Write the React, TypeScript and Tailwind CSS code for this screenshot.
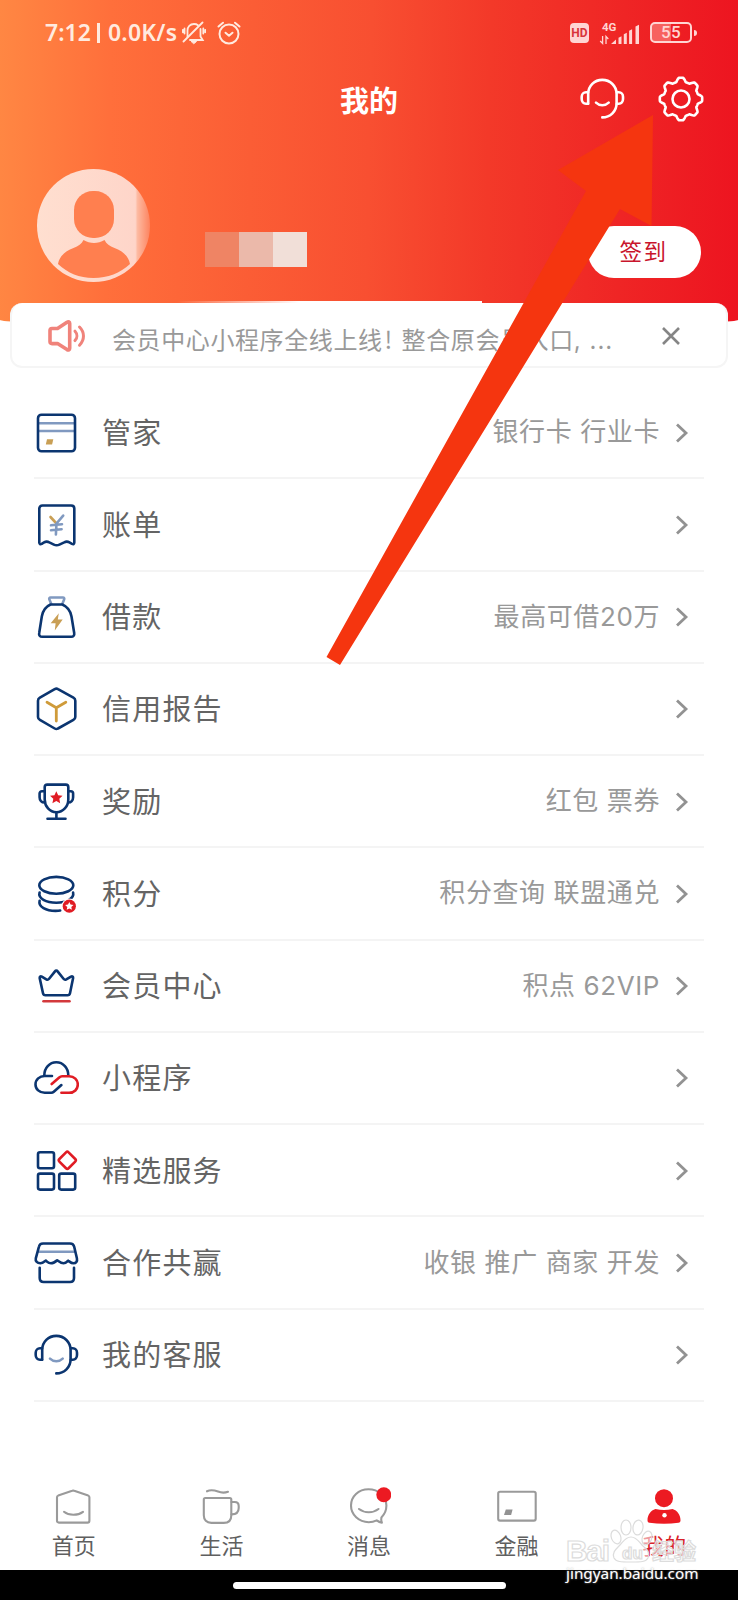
import type { ReactNode } from "react";

const NAVY = "#0b3570";
const STEEL = "#8099c0";
const GOLD = "#c99f55";
const RED = "#e01c24";

function Icon({ children, color = NAVY }: { children: ReactNode; color?: string }) {
  return (
    <svg
      width="46"
      height="46"
      viewBox="0 0 46 46"
      fill="none"
      stroke={color}
      strokeWidth="2.6"
      strokeLinecap="round"
      strokeLinejoin="round"
      className="shrink-0"
    >
      {children}
    </svg>
  );
}

function starPoints(cx: number, cy: number, r: number) {
  return Array.from({ length: 10 }, (_, i) => {
    const a = (i * Math.PI) / 5 - Math.PI / 2;
    const d = i % 2 ? r * 0.48 : r;
    return `${(cx + d * Math.cos(a)).toFixed(2)},${(cy + d * Math.sin(a)).toFixed(2)}`;
  }).join(" ");
}

// eight soft teeth around a circle
const gearPoints = Array.from({ length: 192 }, (_, i) => {
  const a = (i / 192) * Math.PI * 2;
  const wave = Math.max(-1, Math.min(1, Math.cos(8 * a) * 1.6));
  const r = 19.3 + 1.9 * wave;
  return `${(23 + r * Math.sin(a)).toFixed(2)},${(23 - r * Math.cos(a)).toFixed(2)}`;
}).join(" ");

function Headset({ color, smile }: { color: string; smile: string }) {
  return (
    <Icon color={color}>
      <path d="M9.2 27.8V18C9.2 10 15.4 3.9 23.3 3.9S37.6 10 37.6 18v9.2c0 8-6.3 14.2-14.3 14.2" />
      <path d="M9 16.2H7c-2.5 0-4.3 2-4.3 4.6V23c0 2.7 1.8 4.7 4.3 4.7h2M37.8 16.2h2c2.5 0 4.2 2 4.2 4.6V23c0 2.7-1.7 4.7-4.2 4.7h-2" />
      <path d="M17 26.6c3.6 3.5 9 3.5 12.7 0" stroke={smile} />
    </Icon>
  );
}

const rows: { label: string; hint?: string; icon: ReactNode }[] = [
  {
    label: "管家",
    hint: "银行卡 行业卡",
    icon: (
      <Icon>
        <path d="M6 13.2h35M6 21h35" stroke={STEEL} strokeLinecap="butt" />
        <rect x="5" y="4.7" width="37" height="36.6" rx="3.5" />
        <path d="M14 29.300h6.300l-1.200 5.200h-6.300z" fill={GOLD} stroke="none" />
      </Icon>
    ),
  },
  {
    label: "账单",
    icon: (
      <Icon>
        <path d="M9.500 3.500h28.600c2 0 3.200 1.200 3.200 3.100v34c0 1.500-1 2-2.300 1.300l-2.600-1.500c-1.900-1.100-3.300-1.100-5.200 0l-4.800 2.200c-2 .9-3.600.9-5.500 0l-4.600-2.200c-2-1.100-3.300-1.100-5.200 0l-2.400 1.500c-1.300.7-2.400.2-2.400-1.300v-34c0-1.900 1.200-3.100 3.200-3.100z" />
        <path d="M17.500 15l6 6.500" stroke={GOLD} />
        <path d="M30.200 13.600l-6.700 7.900-.6 11M18 23.300l11-1.100M18 28.200l10.600-1" stroke={STEEL} />
      </Icon>
    ),
  },
  {
    label: "借款",
    hint: "最高可借20万",
    icon: (
      <Icon>
        <path d="M18.300 10l-1.900-4.500c-.5-1.200 0-2 1.200-2h12.300c1.200 0 1.700.8 1.200 2L29.300 10" stroke={STEEL} />
        <path d="M17.500 10.500h11.800c5.200 2.300 8.300 7 9.200 12l2.700 16.500c.4 2.300-.8 3.800-3 3.800H9.200c-2.300 0-3.500-1.500-3-3.800l2.600-16.500c.9-5 3.500-9.700 8.700-12z" />
        <path d="M25.800 19.200l-8.100 10.100h4.900l-.8 7.200 7.900-11h-4.900z" fill={GOLD} stroke="none" />
      </Icon>
    ),
  },
  {
    label: "信用报告",
    icon: (
      <Icon>
        <path d="M21.700 3.100c1.200-.7 2.200-.7 3.300 0l15.400 8.600c1.200.7 1.900 1.700 1.900 3v16.200c0 1.300-.7 2.300-1.900 3L25 42.500c-1.100.7-2.100.7-3.300 0L6.900 33.900c-1.200-.7-1.900-1.700-1.900-3V14.700c0-1.300.7-2.300 1.900-3z" />
        <path d="M14 16.300l9.300 5.400 9.500-5.400M23.300 21.700V35" stroke="#cf9b3a" strokeWidth="2.800" />
      </Icon>
    ),
  },
  {
    label: "奖励",
    hint: "红包 票券",
    icon: (
      <Icon>
        <path d="M14.200 5.600h18.600c1.600 0 2.500.9 2.500 2.500v12.300c0 7-5.200 12.800-11.900 12.800s-11.700-5.800-11.700-12.800V8.100c0-1.600.9-2.500 2.500-2.500z" />
        <path d="M11.500 12.300H9c-1.500 0-2.400.9-2.400 2.300v3.600c0 3.200 2 5.300 5 5.300M35.500 12.300h2.300c1.500 0 2.300.9 2.300 2.300v3.600c0 3.200-2 5.300-4.900 5.300M23.400 33.200v6.400M14.500 39.700h18" />
        <polygon points={starPoints(23.3, 18.8, 6.6)} fill={RED} stroke="none" />
      </Icon>
    ),
  },
  {
    label: "积分",
    hint: "积分查询 联盟通兑",
    icon: (
      <Icon>
        <ellipse cx="23.3" cy="14.3" rx="17" ry="8.4" />
        <path d="M6.600 21.500c-1.800 5.900 6.500 10.200 16.700 10.200 10.100 0 18.200-4.300 16.800-10.200M6.600 29.800C5 36 13.300 39.900 22.500 39.900c1.700 0 3.200 0 4.700-.3" />
        <circle cx="36.3" cy="35.2" r="7.8" fill="#fff" stroke="none" />
        <circle cx="36.3" cy="35.2" r="6.6" fill={RED} stroke="none" />
        <polygon points={starPoints(36.3, 35.3, 4.4)} fill="#fff" stroke="none" />
      </Icon>
    ),
  },
  {
    label: "会员中心",
    hint: "积点 62VIP",
    icon: (
      <Icon>
        <path d="M21.800 8.600c1-1.300 2-1.300 3 0l5.700 7.200c.8 1 1.700 1.200 2.800.6l4.700-2.800c1.300-.7 2.400 0 2.100 1.500L37 30.300c-.3 1.400-1 2-2.400 2H12.400c-1.400 0-2.100-.6-2.400-2L6.700 15.100c-.3-1.500.8-2.200 2.100-1.500l4.500 2.800c1.100.6 2 .4 2.800-.6z" />
        <path d="M10.500 38.200h26" stroke="#d3393c" />
      </Icon>
    ),
  },
  {
    label: "小程序",
    icon: (
      <Icon>
        <path d="M11.300 20.300c0-7.200 5.100-13 12-13s12 5.800 12 13" />
        <path d="M19 21h-7.300c-5.200 0-9.200 3.600-9.200 8.400s4 8.400 9.200 8.400h6.500c1.100 0 1.800-.3 2.600-1l7.600-6.700" />
        <path d="M18.700 29l7.500-6.500c.9-.8 1.700-1.200 2.900-1.200h7c5.100 0 8.700 3.500 8.700 8.200 0 4.800-3.600 8.300-8.700 8.300h-7.700" stroke={RED} />
      </Icon>
    ),
  },
  {
    label: "精选服务",
    icon: (
      <Icon>
        <rect x="5" y="4.2" width="16" height="16" rx="2" />
        <rect x="5" y="25.6" width="16" height="16" rx="2" />
        <rect x="26.2" y="25.6" width="16" height="16" rx="2" />
        <rect x="27.8" y="5.8" width="13" height="13" rx="1.800" transform="rotate(45 34.3 12.3)" stroke={RED} />
      </Icon>
    ),
  },
  {
    label: "合作共赢",
    hint: "收银 推广 商家 开发",
    icon: (
      <Icon>
        <path d="M6 11.700h35" stroke={STEEL} />
        <path d="M10 3.500h27c2.200 0 3.700 1.100 4.200 3.300l2.700 11.500c.7 3-1 5-3.300 5-2.400 0-3.700-1.400-5.400-2.600-1.300 1.200-2.800 2.600-4.700 2.600-2.500 0-4.700-2-6.300-3-1.800 1.400-3.800 3-6.200 3-2.300 0-3.700-1.500-5.200-2.700-1.600 1.200-3.200 2.700-5.500 2.700-2.900 0-5.200-2-4.500-5L5.900 6.800C6.400 4.600 7.800 3.500 10 3.500z" />
        <path d="M6.700 27.700V38c0 2.600 1.500 4 4 4H37c2.600 0 4-1.400 4-4V27.700" />
      </Icon>
    ),
  },
  { label: "我的客服", icon: <Headset color={NAVY} smile={STEEL} /> },
];

const tabs: { label: string; icon: ReactNode; active?: boolean }[] = [
  {
    label: "首页",
    icon: (
      <>
        <path d="M5 12.300c0-.8.5-1.400 1.200-1.700l14-4.800c.8-.3 1.300-.3 2 0l14 4.800c.7.300 1.200.9 1.200 1.700v23.500c0 1.100-.7 1.800-1.800 1.800H6.800C5.700 37.600 5 36.900 5 35.800z" />
        <path d="M12 26.800c5 4 13.500 4 19 0" />
      </>
    ),
  },
  {
    label: "生活",
    icon: (
      <>
        <path d="M8 6.300c4-2 7.500-1 11 .3 3.500 1.300 6.500 1.400 10 .2" />
        <path d="M6.300 13h24.500c1 0 1.500.5 1.500 1.500v15.700c0 4.800-2.700 7.700-7.500 7.700H12.300c-4.700 0-7.500-2.900-7.500-7.700V14.500c0-1 .5-1.500 1.500-1.500z" />
        <path d="M32.500 17h3.200c2.500 0 4 1.400 4 4v2c0 4-2.800 6.400-7.200 6.400" />
      </>
    ),
  },
  {
    label: "消息",
    icon: (
      <>
        <path d="M21.500 4.300C11.500 4.300 4 11.400 4 20.600s7.800 16.600 17.700 16.600c3 0 5.700-.7 8-1.800 1.700 1.300 3.300 2 5.200 2.200-.7-1.500-.9-3.500-.5-5.200 3.200-3 5-7 5-11.800 0-9.200-8-16.300-17.900-16.300z" />
        <path d="M12 24c5.500 4.300 14 4.300 19.500 0" />
        <circle cx="36.800" cy="9.800" r="7.500" fill="#ec1a22" stroke="none" />
      </>
    ),
  },
  {
    label: "金融",
    icon: (
      <>
        <rect x="3.200" y="6.800" width="37.500" height="28.800" rx="1.800" />
        <path d="M10.800 24.600h6.800l-1.500 5.400H9z" fill="#929292" stroke="none" />
      </>
    ),
  },
  {
    label: "我的",
    active: true,
    icon: (
      <g fill="#ec1a22" stroke="none">
        <circle cx="22" cy="13.200" r="9" />
        <path d="M13.500 24c5.500 1.200 11.500 1.200 17 0 4.800 1.300 8 6 8 11.300 0 1.500-.6 2.300-2 2.500-9.300 1.300-19.700 1.300-29 0-1.400-.2-2-1-2-2.500 0-5.300 3.200-10 8-11.300z" />
        <circle cx="22.500" cy="30.300" r="2.200" fill="#fff" />
      </g>
    ),
  },
];

function StatusBar() {
  return (
    <div className="flex h-16 items-center pl-[45px] pr-[41px] pt-px text-[#ffeadf]">
      <span className="w-[49px] whitespace-nowrap font-['Noto_Sans',sans-serif] text-[23px] leading-none font-semibold">7:12</span>
      <span className="ml-[3px] h-5 w-[3px] bg-[#ffeadf]" />
      <span className="ml-2 w-[69px] whitespace-nowrap font-['Noto_Sans',sans-serif] text-[23px] leading-none font-semibold tracking-[0.2px]">0.0K/s</span>
      <svg width="24" height="24" viewBox="0 0 24 24" fill="none" stroke="currentColor" strokeWidth="1.800" strokeLinecap="round" className="ml-[5px]">
        <path d="M5.500 16V9.500C5.500 5.700 8 3 12 3c1.500 0 3 .4 4 1.200M18.500 8v7.500l2.200 3.500H8" />
        <path d="M20.500 1.500L1.500 20.500M2.500 7.500v5M.9 8.800v2.500M21.300 7.500v5M23.200 8.800v2.500" />
        <path d="M9.500 20.500h5l-2.500 2z" fill="currentColor" strokeWidth="1" />
      </svg>
      <svg width="24" height="24" viewBox="0 0 24 24" fill="none" stroke="currentColor" strokeWidth="2" strokeLinecap="round" strokeLinejoin="round" className="ml-[11px]">
        <circle cx="12" cy="13" r="9.500" />
        <path d="M8.500 11.700l3.500 3 3.500-3M1.500 5.500L6 1.700M22.500 5.500L18 1.700" />
      </svg>
      <div className="ml-auto flex items-center text-[#ffd5d3]">
        <span className="flex h-5 w-[19px] items-center justify-center rounded-[4px] bg-[#ffd5d3] font-['Roboto',sans-serif] text-[12px] font-bold text-[#d8343a]">HD</span>
        <svg width="42" height="26" viewBox="0 -2 42 26" className="ml-[10px] overflow-visible" fill="currentColor">
          <text x="3" y="9" fontFamily="Roboto, sans-serif" fontSize="11.5" fontWeight="700">4G</text>
          <path d="M12 22l5-4.500V22zM19.500 22v-6.300l3-1.500V22zM24.800 22v-9.800l3-1.500V22zM30.100 22V8.700l3-1.500V22zM36.500 22V4.500l3.500-1.800V22z" />
          <path d="M3.600 14v7.500L1.200 19M7 22v-7.500L9.300 17" fill="none" stroke="currentColor" strokeWidth="1.300" />
        </svg>
        <span className="ml-[9px] flex h-[21px] w-[42px] items-center justify-center rounded-[5px] border-2 border-[#ffd5d3] bg-linear-to-r from-[#f7625f] from-50% to-transparent to-50% font-['Roboto',sans-serif] text-[17px] leading-none font-medium tracking-wide">55</span>
        <span className="ml-0.5 h-[6px] w-[3px] rounded-r-sm bg-[#ffd5d3]" />
      </div>
    </div>
  );
}

function Header() {
  return (
    <header className="h-[326px] rounded-b-[50%_6px] bg-[linear-gradient(91deg,#ff8743_0%,#ff6f3b_15%,#fb5d35_34%,#f84f31_50%,#f33929_66%,#ef2525_84%,#ed1420_100%)]">
      <StatusBar />
      <div className="grid h-[70px] grid-cols-[1fr_auto_1fr] items-center px-[34px] text-white">
        <span />
        <h1 className="text-[29px] leading-none font-bold">我的</h1>
        <div className="flex justify-end gap-[33px]">
          <Headset color="#fff" smile="#fff" />
          <Icon color="#fff">
            <polygon points={gearPoints} />
            <circle cx="23" cy="23" r="8.500" />
          </Icon>
        </div>
      </div>
      <div className="flex items-start pt-[35px] pr-[37px] pl-[37px]">
        <svg width="113" height="113" viewBox="0 0 113 113" className="shrink-0">
          <defs>
            <linearGradient id="avatar" x1="0" y1="0" x2="1" y2="0">
              <stop offset="0%" stopColor="#ffdfd0" />
              <stop offset="87%" stopColor="#fed5c9" />
              <stop offset="89%" stopColor="#fdb9a0" />
              <stop offset="100%" stopColor="#fd835f" />
            </linearGradient>
          </defs>
          <circle cx="56.500" cy="56.500" r="56.500" fill="url(#avatar)" />
          <rect x="37" y="22" width="40" height="47" rx="19" fill="#ff7f4f" />
          <path d="M46.500 71c6.500 4 14.500 4 21 0 2 4 5 6 10 8 8 3 14 8 15.500 16-10 9-22 14-36.500 14S31 104 21 95c1.500-8 7.500-13 15.500-16 5-2 8-4 10-8z" fill="#ff7f4f" />
        </svg>
        <div className="mt-[63px] ml-[55px] flex h-[35px] w-[102px]">
          <span className="flex-1 bg-[#ef8464]" />
          <span className="flex-1 bg-[#ebb9aa]" />
          <span className="flex-1 bg-[#f1dfd8]" />
        </div>
        <button className="mt-[57px] ml-auto h-[52px] w-[113px] rounded-full bg-white pr-0.5 pb-0.5 text-[22.500px] tracking-[1.500px] text-[#c9152c]">签到</button>
      </div>
    </header>
  );
}

function Notice() {
  return (
    <div className="relative mx-2.5 -mt-[23px] flex h-[65px] items-center rounded-xl border-2 border-t-0 border-[#f5f5f5] bg-white pr-[45px] pl-9">
      {/* pixelated strip left over along the top edge */}
      <span className="absolute -top-[2px] left-[165px] h-[3px] w-[305px] bg-linear-to-r from-transparent via-white via-40% to-white" />
      <svg width="40" height="34" viewBox="0 0 40 34" fill="none" stroke="#f0837b" strokeWidth="3.600" strokeLinejoin="round" strokeLinecap="round" className="mt-0.5">
        <path d="M4 9.500h5.500L19 3.200c1.500-.9 2.700-.3 2.700 1.300v24.800c0 1.600-1.200 2.200-2.700 1.300l-9.500-6H4c-1.200 0-2-.8-2-2v-11c0-1.300.8-2.100 2-2.100z" />
        <path d="M27 12.200c2.500 2.700 2.500 6.700 0 9.400M31.500 8c5.300 5.200 5.300 13 0 18.200" strokeWidth="3" />
      </svg>
      <p className="mt-[10px] ml-6 whitespace-nowrap text-[24px] leading-none tracking-[0.600px] text-[#999]">
        会员中心小程序全线上线
        <span className="inline-block w-[19px] pl-0.5">!</span>
        整合原会员入口
        <span className="font-['Inter',sans-serif] tracking-[1px]">, ...</span>
      </p>
      <svg width="20" height="20" viewBox="0 0 20 20" stroke="#858585" strokeWidth="2.600" className="mt-0.5 ml-auto">
        <path d="M2 2l16 16M18 2L2 18" />
      </svg>
    </div>
  );
}

function TabBar() {
  return (
    <nav className="grid h-[96px] grid-cols-5">
      {tabs.map((t) => (
        <a key={t.label} className="flex flex-col items-center pt-[11px]">
          <svg width="44" height="44" viewBox="0 0 44 44" fill="none" stroke="#9a9a9a" strokeWidth="2.100" strokeLinecap="round" strokeLinejoin="round" className="shrink-0">
            {t.icon}
          </svg>
          <span className={`mt-1 text-[22px] leading-none ${t.active ? "text-[#d9232b]" : "text-[#5f5f5f]"}`}>{t.label}</span>
        </a>
      ))}
    </nav>
  );
}

function Watermark() {
  return (
    <div className="absolute top-[1518px] left-[566px] h-[66px] w-[140px] font-['Liberation_Sans',sans-serif]">
      <svg width="140" height="48" viewBox="0 0 140 48" fill="#fff" fillOpacity="0.55" stroke="#dcdcdc" strokeWidth="1.200">
        <text x="0" y="43" fontSize="30" fontWeight="700" textLength="44">Bai</text>
        <ellipse cx="50" cy="19" rx="4.700" ry="7" transform="rotate(-20 50 19)" />
        <ellipse cx="60" cy="9.500" rx="5" ry="7.500" />
        <ellipse cx="72" cy="9.500" rx="5" ry="7.500" transform="rotate(8 72 9.500)" />
        <ellipse cx="81" cy="20" rx="4.700" ry="7" transform="rotate(20 81 20)" />
        <path d="M65 19c6 0 8 5 12 9 5 4 7 7 5 12-2 4-7 4-17 4s-15 0-17-4c-2-5 1-8 5-12 4-4 6-9 12-9z" />
        <text x="56" y="41" fontSize="17" fontWeight="700">du</text>
        <text x="86" y="41" fontSize="22" fontFamily="Noto Sans CJK SC, sans-serif" fontWeight="700">经验</text>
      </svg>
      <span className="absolute top-[45px] left-0 whitespace-nowrap font-['Noto_Sans',sans-serif] text-[15.300px] leading-[20px] text-white [text-shadow:0_0_2px_#999]">jingyan.baidu.com</span>
    </div>
  );
}

export default function App() {
  return (
    <div className="relative flex h-[1600px] w-[738px] flex-col overflow-hidden bg-white font-['Noto_Sans_CJK_SC',sans-serif]">
      <Header />
      <Notice />
      <ul className="mr-[34px] ml-[34px] mt-[19px] flex h-[1015px] flex-col">
        {rows.map((r) => (
          <li key={r.label} className="flex flex-1 items-center border-b-2 border-[#f4f4f4] pt-px pr-[15px]">
            <span className="-ml-px">{r.icon}</span>
            <span className="mb-[3px] ml-[23px] text-[29px] leading-none tracking-[1.200px] text-[#646464]">{r.label}</span>
            <span className="mr-[15px] mb-px ml-auto font-['Inter','Noto_Sans_CJK_SC',sans-serif] text-[26px] leading-none tracking-[0.600px] text-[#999]">{r.hint}</span>
            <svg width="14" height="20" viewBox="0 0 14 20" fill="none" stroke="#929292" strokeWidth="2.800">
              <path d="M2 1.500L11 10l-9 8.500" />
            </svg>
          </li>
        ))}
      </ul>
      <div className="mt-auto">
        <TabBar />
        <div className="flex h-[30px] items-center justify-center bg-black">
          <span className="h-[7px] w-[273px] rounded-full bg-white" />
        </div>
      </div>

      {/* pointer towards the settings gear */}
      <svg width="738" height="1600" viewBox="0 0 738 1600" className="pointer-events-none absolute inset-0">
        <polygon points="653,115 651.500,226 620,209 340,665 326.500,657 586,191 558,170" fill="#f5350f" />
      </svg>
      <Watermark />
    </div>
  );
}
